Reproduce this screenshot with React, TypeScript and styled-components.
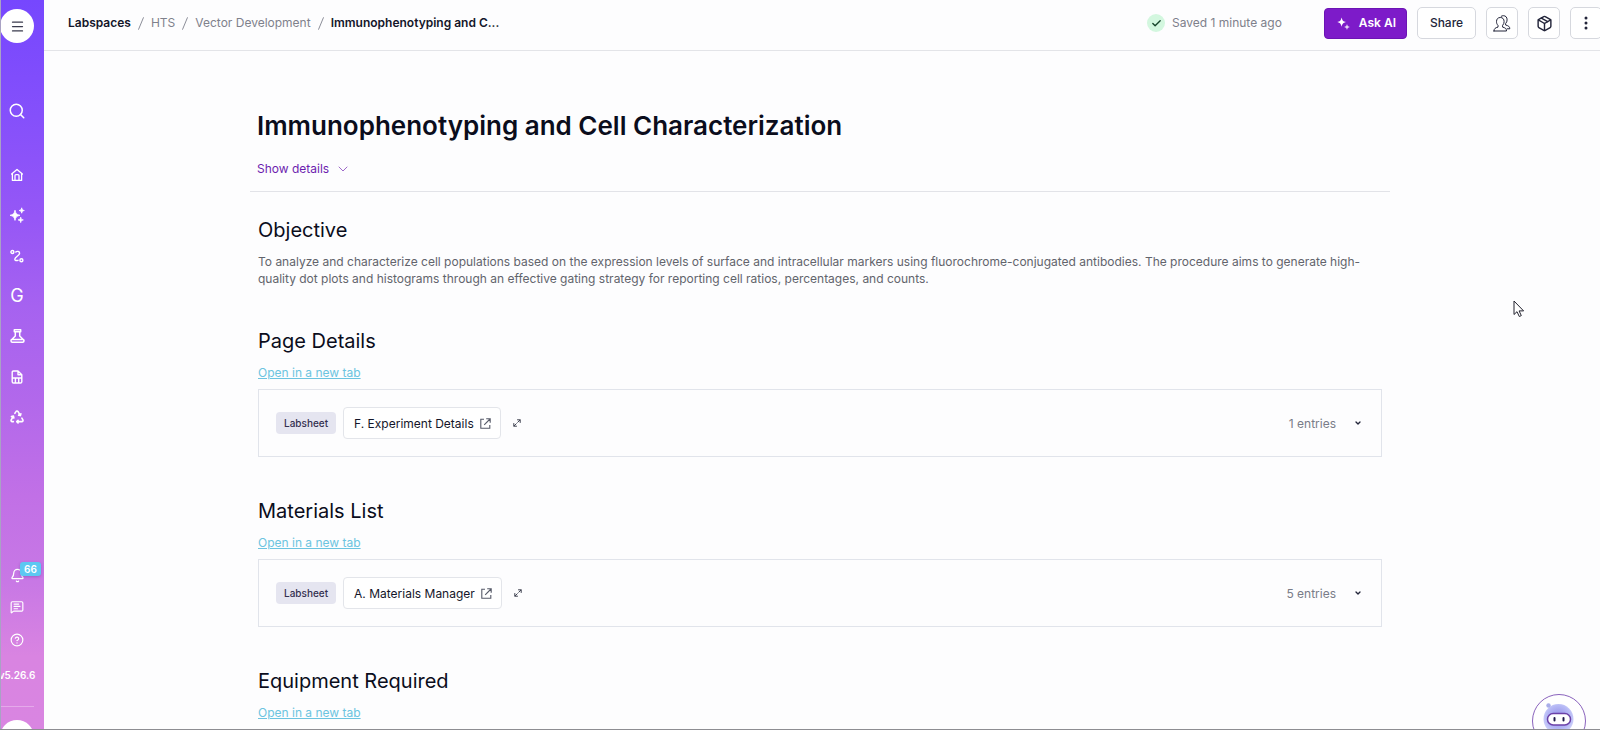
import React from 'react';
import styled, { createGlobalStyle } from 'styled-components';
import { Bell, Check, ChevronDown, CircleHelp, Menu, MessageSquareText, Package, Search } from 'lucide-react';

const GlobalStyle = createGlobalStyle`
  *, *::before, *::after { box-sizing: border-box; }
  html, body { margin: 0; }
  body {
    background: #fdfdfe;
    color: #0b0d1c;
    font: 400 12px/17px Inter, "Liberation Sans", sans-serif;
  }
  button { font: inherit; color: inherit; cursor: pointer; }
  svg { display: block; flex: none; }
`;

const Page = styled.div`
  display: flex;
  height: 100vh;
  overflow: hidden;
  position: relative;
  border-bottom: 1px solid #8d8d92;
`;

const Sidebar = styled.nav`
  display: flex;
  flex: none;
  flex-direction: column;
  justify-content: space-between;
  width: 44px;
  padding-right: 11px;
  overflow: hidden;
  border-left: 1px solid #a9a2c4;
  color: #fff;
  background: linear-gradient(180deg, #7647fe 0%, #8550fb 16%, #9657f6 30%, #a662f0 42%, #b268eb 55%, #c170e6 68%, #c878e5 80%, #d984e1 90%, #d985e1 100%);
`;

const NavGroup = styled.div`
  display: flex;
  flex: none;
  flex-direction: column;
  align-items: center;
`;

const MenuButton = styled.button`
  display: grid;
  place-items: center;
  width: 34px;
  height: 34px;
  margin: 9px 0 48px;
  padding: 0;
  border: 0;
  border-radius: 50%;
  background: #fff;
  color: #3a3b4d;
`;

const NavLink = styled.a<{ $height?: number; $gapAfter?: number }>`
  display: grid;
  place-items: center;
  position: relative;
  width: 34px;
  height: ${(p) => p.$height ?? 40}px;
  margin-bottom: ${(p) => p.$gapAfter ?? 0}px;
  color: #fff;
  text-decoration: none;
`;

const GLetter = styled.span`
  font-size: 18px;
  line-height: 20px;
`;

const Count = styled.span`
  position: absolute;
  top: 3px;
  left: 20px;
  padding: 0 4px;
  border-radius: 3px;
  background: #5cc8f2;
  box-shadow: 0 1px 3px rgba(70, 30, 120, 0.3);
  font-size: 10px;
  font-weight: 600;
  line-height: 14px;
`;

const Version = styled.span`
  margin-top: 10px;
  font-size: 10px;
  font-weight: 600;
  line-height: 16px;
`;

const SidebarRule = styled.hr`
  width: 34px;
  margin: 23px 0 13px;
  border: 0;
  border-top: 1px solid #e5a9ea;
`;

const AvatarClip = styled.div`
  height: 9px;
  overflow: hidden;
`;

const Avatar = styled.div`
  width: 34px;
  height: 34px;
  border-radius: 50%;
  background: #fff;
`;

const Workspace = styled.div`
  display: flex;
  flex: 1;
  flex-direction: column;
  min-width: 0;
`;

const Header = styled.header`
  display: flex;
  flex: none;
  align-items: center;
  justify-content: space-between;
  height: 51px;
  padding: 0 0 4px 24px;
  border-bottom: 1px solid #e3e4e8;
  line-height: 18px;
`;

const Breadcrumb = styled.nav`
  display: flex;
  align-items: center;
  gap: 7px;
  color: #8b8d98;
`;

const Crumb = styled.a<{ $strong?: boolean }>`
  color: ${(p) => (p.$strong ? '#14162a' : '#7f818c')};
  font-weight: ${(p) => (p.$strong ? 600 : 400)};
  text-decoration: none;
`;

const HeaderActions = styled.div`
  display: flex;
  align-items: center;
  gap: 10px;
  margin-right: -2px;
`;

const SaveStatus = styled.div`
  display: flex;
  align-items: center;
  gap: 7px;
  margin-right: 32px;
  color: #7d808b;
`;

const SavedMark = styled.span`
  display: grid;
  place-items: center;
  width: 18px;
  height: 18px;
  border-radius: 50%;
  background: #d3f7df;
  color: #17452b;
`;

const AskButton = styled.button`
  display: flex;
  align-items: center;
  gap: 9px;
  height: 31px;
  padding: 0 10px 0 12px;
  border: 1px solid #6c14b4;
  border-radius: 4px;
  background: #7d1bc9;
  color: #fff;
  font-weight: 600;
`;

const OutlineButton = styled.button<{ $square?: boolean }>`
  display: grid;
  place-items: center;
  width: ${(p) => (p.$square ? 32 : 59)}px;
  height: 32px;
  padding: 0;
  border: 1px solid #d6d8de;
  border-radius: 5px;
  background: #fff;
  color: #23253a;
  font-weight: 500;
`;

const Main = styled.main`
  flex: 1;
  min-height: 0;
  overflow: hidden;
  padding: 59px 210px 0 206px;
`;

const TitleBlock = styled.div`
  padding: 0 7px 14px;
  border-bottom: 1px solid #e2e3e8;
`;

const Title = styled.h1`
  margin: 0 0 18px;
  font-size: 26px;
  font-weight: 600;
  line-height: 32px;
`;

const DetailsToggle = styled.button`
  display: flex;
  align-items: center;
  gap: 6px;
  padding: 0;
  border: 0;
  background: none;
  color: #6d1eaf;
`;

const Section = styled.section`
  margin: 0 8px 40px;
`;

const Sections = styled.div`
  padding-top: 24px;
`;

const Heading = styled.h2`
  margin: 0 0 8px;
  font-size: 20px;
  font-weight: 400;
  line-height: 28px;
`;

const Paragraph = styled.p`
  margin: 0;
  padding-top: 1px;
  color: #62646c;
`;

const TabLink = styled.a`
  display: table;
  margin-bottom: 6px;
  color: #6cc4e0;
  line-height: 20px;
`;

const SheetCard = styled.div`
  display: flex;
  align-items: center;
  justify-content: space-between;
  height: 68px;
  padding: 0 8px 0 17px;
  border: 1px solid #e1e4eb;
`;

const SheetSide = styled.div`
  display: flex;
  align-items: center;
  gap: 7px;
  color: #797c88;
`;

const Chip = styled.span`
  padding: 0 8px;
  border-radius: 4px;
  background: #e5e5f0;
  color: #34304f;
  font-size: 10px;
  font-weight: 500;
  line-height: 22px;
`;

const SheetButton = styled.button`
  display: flex;
  align-items: center;
  gap: 6px;
  height: 32px;
  padding: 0 9px 0 10px;
  border: 1px solid #e3e5ea;
  border-radius: 4px;
  background: #fff;
  color: #14162a;
`;

const BareButton = styled.button<{ $width: number }>`
  display: grid;
  place-items: center;
  width: ${(p) => p.$width}px;
  height: 24px;
  padding: 0;
  border: 0;
  background: none;
  color: #23253a;
`;

const Assistant = styled.button`
  position: absolute;
  right: 13px;
  bottom: -20px;
  padding: 0;
  border: 0;
  background: none;
`;

const Cursor = styled.svg`
  position: absolute;
  top: 300px;
  right: 74px;
`;

const line = { fill: 'none', stroke: 'currentColor', strokeLinecap: 'round', strokeLinejoin: 'round' } as const;

const HomeIcon = () => (
  <svg width="14" height="14" viewBox="0 0 14 14" strokeWidth="1.3" {...line}>
    <path d="M1.6 6 7 1.4 12.4 6M2.4 5.6v6.8h9.2V5.6M5 12.2V7.6c0-.6.3-1 1-1h2c.7 0 1 .4 1 1v4.6" />
  </svg>
);

const Sparkles = () => (
  <svg width="16" height="16" viewBox="0 0 16 16" fill="currentColor" stroke="currentColor" strokeWidth=".8" strokeLinejoin="round">
    <path d="M6 3.2c.8 3.500 1.600 4.300 5 5.100-3.400.8-4.200 1.600-5 5.100-.8-3.500-1.600-4.300-5-5.100 3.400-.8 4.200-1.600 5-5.100Z" />
    <path d="M12.700.8c.4 1.900.8 2.300 2.600 2.700-1.800.4-2.200.8-2.600 2.700-.4-1.900-.8-2.300-2.600-2.700 1.800-.4 2.200-.8 2.600-2.700ZM11.700 10.200c.4 1.900.8 2.300 2.600 2.700-1.800.4-2.200.8-2.600 2.700-.4-1.900-.8-2.300-2.600-2.700 1.800-.4 2.200-.8 2.600-2.700Z" />
  </svg>
);

const FlowIcon = () => (
  <svg width="14" height="14" viewBox="0 0 14 14" strokeWidth="1.4" {...line}>
    <circle cx="2.400" cy="3" r="1.500" />
    <circle cx="11.400" cy="11.200" r="1.500" />
    <path d="M5.800 3c1.200-1.100 3.800-.8 3.800 1.200 0 2.300-4.600 3.700-4.800 6 0 1.400 1.500 1.600 3.200 1.100" />
  </svg>
);

const FlaskIcon = () => (
  <svg width="15" height="16" viewBox="0 0 15 16" strokeWidth="1.500" {...line}>
    <path d="M4.300 1.700h6.400v2H4.300zM5.300 3.900v4L1.800 11.500M9.700 3.900v4l3.500 3.600M1.800 11.500h11.400c1 0 1.200 2.700-.4 2.700H2.200c-1.600 0-1.400-2.700-.4-2.700Z" />
  </svg>
);

const FileIcon = () => (
  <svg width="12" height="14" viewBox="0 0 12 14" strokeWidth="1.400" {...line}>
    <path d="M7 1H2.500C1.700 1 1.200 1.500 1.200 2.300v9.400c0 .8.5 1.300 1.300 1.300h7c.8 0 1.300-.5 1.300-1.300V4.800ZM7 1v3.800h3.800M1.500 8h9M4.400 8v4.600M7.700 8v4.600" />
  </svg>
);

const RecycleIcon = () => (
  <svg width="16" height="16" viewBox="0 0 24 24" strokeWidth="2.400" {...line}>
    <path d="M6.500 19H4.800a1.800 1.800 0 0 1-1.500-.9 1.800 1.800 0 0 1 0-1.800L6.500 11M12 19h7.200a1.800 1.800 0 0 0 1.600-.9 1.800 1.800 0 0 0 0-1.800l-1.500-2.600M13.600 17l-2 2 2 2M7.300 13.400 6.600 10.600l-2.900.8M8.800 6.500l1.600-2.600A1.800 1.800 0 0 1 12 3a1.800 1.800 0 0 1 1.600.9l3.300 5.700M14.400 9.200l2.700.7.7-2.800" />
  </svg>
);

const AskSparkles = () => (
  <svg width="13" height="13" viewBox="0 0 13 13" fill="currentColor">
    <path d="M4.600.4c.9 3.200 1.400 3.800 4.500 4.700-3.100.9-3.600 1.500-4.500 4.700C3.700 6.600 3.200 6 .1 5.100c3.100-.9 3.600-1.500 4.500-4.700Z" />
    <path opacity=".8" d="M10 6.900c.5 2 1 2.500 2.900 3-1.900.5-2.400 1-2.900 3-.5-2-1-2.500-2.900-3 1.900-.5 2.400-1 2.900-3Z" />
  </svg>
);

const PeopleIcon = () => (
  <svg width="18" height="17" viewBox="0 0 18 17" strokeWidth="1" {...line}>
    <path d="M1 16h12.500c0-2.600-1.200-3.100-3.900-3.900v-1.800c1-.9 1.500-2.200 1.500-3.600C11.100 4 9.700 2.500 7.300 2.500S3.500 4 3.500 6.700c0 1.400.5 2.700 1.500 3.600v1.800C2.300 12.900 1 13.400 1 16Z" />
    <path d="M8.200 1.300c.6-.4 1.300-.6 2.100-.6 2.400 0 3.800 1.500 3.800 4.200 0 1.400-.5 2.700-1.500 3.600v1.500c2.700.7 4.200 1.500 4.200 3.800h-2.600" />
  </svg>
);

const DotsIcon = () => (
  <svg width="4" height="14" viewBox="0 0 4 14" fill="currentColor">
    <circle cx="2" cy="2" r="1.500" />
    <circle cx="2" cy="7" r="1.500" />
    <circle cx="2" cy="12" r="1.500" />
  </svg>
);

const OpenIcon = () => (
  <svg width="11" height="11" viewBox="0 0 11 11" strokeWidth="1.100" {...line} strokeLinecap="butt" strokeLinejoin="miter" color="#565a68">
    <path d="M4 1.200H.8v9h9V7M6.200.8h4v4M10 1 4.200 6.800" />
  </svg>
);

const ExpandIcon = () => (
  <svg width="8" height="8" viewBox="0 0 8 8" strokeWidth="1" {...line} color="#3f4250">
    <path d="M4.500.8h2.700v2.700M7 1 4.700 3.300M3.500 7.200H.8V4.500M1 7l2.300-2.300" />
  </svg>
);

const RobotIcon = () => (
  <svg width="56" height="56" viewBox="0 0 56 56">
    <defs>
      <radialGradient id="robot-head" cx="50%" cy="45%" r="55%">
        <stop offset="0" stopColor="#8f8be6" />
        <stop offset=".7" stopColor="#b5b8f5" />
        <stop offset="1" stopColor="#cfd2fa" />
      </radialGradient>
    </defs>
    <circle cx="28" cy="28" r="26.500" fill="#fff" stroke="#8a63bd" />
    <circle cx="27.500" cy="26" r="15" fill="url(#robot-head)" />
    <circle cx="17.500" cy="12.500" r="2.200" fill="#a9aee9" />
    <rect x="16.500" y="20.500" width="23" height="11.500" rx="5.700" fill="#fff" stroke="#6b41a8" strokeWidth="1.500" />
    <rect x="22.500" y="24" width="2" height="4.500" rx="1" fill="#1f1a4a" />
    <rect x="31.500" y="24" width="2" height="4.500" rx="1" fill="#1f1a4a" />
  </svg>
);

const crumbs = [
  { label: 'Labspaces', strong: true },
  { label: 'HTS' },
  { label: 'Vector Development' },
  { label: 'Immunophenotyping and C...', strong: true },
];

type Sheet = { name: string; entries: number };

const sections: { heading: string; sheet?: Sheet }[] = [
  { heading: 'Page Details', sheet: { name: 'F. Experiment Details', entries: 1 } },
  { heading: 'Materials List', sheet: { name: 'A. Materials Manager', entries: 5 } },
  { heading: 'Equipment Required' },
];

function SheetRow({ name, entries }: Sheet) {
  return (
    <SheetCard>
      <SheetSide>
        <Chip>Labsheet</Chip>
        <SheetButton>
          {name}
          <OpenIcon />
        </SheetButton>
        <BareButton $width={18} aria-label="Expand">
          <ExpandIcon />
        </BareButton>
      </SheetSide>
      <SheetSide>
        {entries} entries
        <BareButton $width={30} aria-label="Show entries">
          <ChevronDown size={8} strokeWidth={4} />
        </BareButton>
      </SheetSide>
    </SheetCard>
  );
}

export default function App() {
  return (
    <Page>
      <GlobalStyle />
      <Sidebar aria-label="Main">
        <NavGroup>
          <MenuButton aria-label="Menu">
            <Menu size={15} strokeWidth={2} />
          </MenuButton>
          <NavLink href="#search" aria-label="Search" $gapAfter={24}>
            <Search size={18} strokeWidth={2} />
          </NavLink>
          <NavLink href="#home" aria-label="Home"><HomeIcon /></NavLink>
          <NavLink href="#ai" aria-label="AI"><Sparkles /></NavLink>
          <NavLink href="#workflows" aria-label="Workflows" $height={41}><FlowIcon /></NavLink>
          <NavLink href="#g"><GLetter>G</GLetter></NavLink>
          <NavLink href="#lab" aria-label="Lab"><FlaskIcon /></NavLink>
          <NavLink href="#files" aria-label="Files" $height={41}><FileIcon /></NavLink>
          <NavLink href="#recycle" aria-label="Recycle"><RecycleIcon /></NavLink>
        </NavGroup>
        <NavGroup>
          <NavLink href="#alerts" aria-label="Notifications" $height={32}>
            <Bell size={15} strokeWidth={2} />
            <Count>66</Count>
          </NavLink>
          <NavLink href="#messages" aria-label="Messages" $height={32}>
            <MessageSquareText size={14} strokeWidth={2} />
          </NavLink>
          <NavLink href="#help" aria-label="Help" $height={34}>
            <CircleHelp size={14} strokeWidth={2} />
          </NavLink>
          <Version>v5.26.6</Version>
          <SidebarRule />
          <AvatarClip><Avatar /></AvatarClip>
        </NavGroup>
      </Sidebar>
      <Workspace>
        <Header>
          <Breadcrumb aria-label="Breadcrumb">
            {crumbs.map((c, i) => (
              <React.Fragment key={c.label}>
                {i > 0 && (
                  <svg width="6" height="13" viewBox="0 0 6 13" strokeWidth="1" {...line}>
                    <path d="M5.400.7.6 12.300" />
                  </svg>
                )}
                <Crumb href="#crumb" $strong={c.strong}>{c.label}</Crumb>
              </React.Fragment>
            ))}
          </Breadcrumb>
          <HeaderActions>
            <SaveStatus>
              <SavedMark><Check size={11} strokeWidth={3} /></SavedMark>
              Saved 1 minute ago
            </SaveStatus>
            <AskButton><AskSparkles />Ask AI</AskButton>
            <OutlineButton>Share</OutlineButton>
            <OutlineButton $square aria-label="People"><PeopleIcon /></OutlineButton>
            <OutlineButton $square aria-label="Package"><Package size={17} strokeWidth={2} /></OutlineButton>
            <OutlineButton $square aria-label="More"><DotsIcon /></OutlineButton>
          </HeaderActions>
        </Header>
        <Main>
          <TitleBlock>
            <Title>Immunophenotyping and Cell Characterization</Title>
            <DetailsToggle>
              Show details
              <ChevronDown size={16} strokeWidth={1} />
            </DetailsToggle>
          </TitleBlock>
          <Sections>
            <Section>
              <Heading>Objective</Heading>
              <Paragraph>
                To analyze and characterize cell populations based on the expression levels of surface and
                intracellular markers using fluorochrome-conjugated antibodies. The procedure aims to generate
                high-quality dot plots and histograms through an effective gating strategy for reporting cell
                ratios, percentages, and counts.
              </Paragraph>
            </Section>
            {sections.map((s) => (
              <Section key={s.heading}>
                <Heading>{s.heading}</Heading>
                <TabLink href="#sheet">Open in a new tab</TabLink>
                {s.sheet && <SheetRow {...s.sheet} />}
              </Section>
            ))}
          </Sections>
        </Main>
      </Workspace>
      <Cursor width="13" height="18" viewBox="0 0 13 18">
        <path d="M1 1v13.500l3-2.800 2.300 4.800 2-.9-2.200-4.700h4.500Z" fill="#fff" stroke="#22222e" strokeLinejoin="round" />
      </Cursor>
      <Assistant aria-label="Assistant"><RobotIcon /></Assistant>
    </Page>
  );
}
